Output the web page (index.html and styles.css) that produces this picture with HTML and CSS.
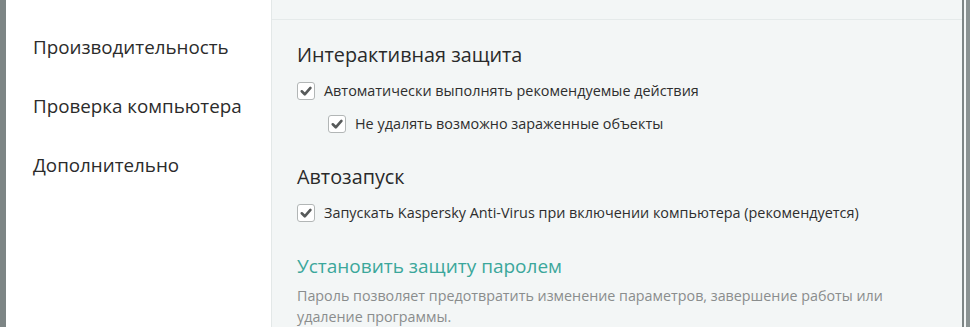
FILE: index.html
```html
<!DOCTYPE html>
<html lang="ru">
<head>
<meta charset="utf-8">
<link rel="stylesheet" href="styles.css">
</head>
<body>
<div class="window">
  <nav class="sidebar">
    <div class="nav-item">Производительность</div>
    <div class="nav-item">Проверка компьютера</div>
    <div class="nav-item">Дополнительно</div>
  </nav>
  <main class="content">
    <div class="topband"></div>
    <section class="body">
      <h2 class="heading">Интерактивная защита</h2>
      <label class="check"><span class="box"><svg viewBox="0 0 17 17"><path d="M4 8.8 L7.2 12 L13.2 5.2" /></svg></span>Автоматически выполнять рекомендуемые действия</label>
      <label class="check sub"><span class="box"><svg viewBox="0 0 17 17"><path d="M4 8.8 L7.2 12 L13.2 5.2" /></svg></span>Не удалять возможно зараженные объекты</label>
      <h2 class="heading second">Автозапуск</h2>
      <label class="check"><span class="box"><svg viewBox="0 0 17 17"><path d="M4 8.8 L7.2 12 L13.2 5.2" /></svg></span>Запускать Kaspersky Anti-Virus при включении компьютера (рекомендуется)</label>
      <a class="link">Установить защиту паролем</a>
      <p class="desc">Пароль позволяет предотвратить изменение параметров, завершение работы или удаление программы.</p>
    </section>
  </main>
  <div class="edge"></div>
</div>
</body>
</html>
```
FILE: styles.css
```css
* { box-sizing: border-box; }
html, body { margin: 0; padding: 0; }
body {
  width: 970px;
  height: 327px;
  overflow: hidden;
  font-family: "Open Sans", "Noto Sans", sans-serif;
  background: #fff;
}
.window {
  display: flex;
  height: 327px;
  border-left: 6px solid #7d8585;
}
.sidebar {
  width: 266px;
  flex: none;
  background: #fff;
  border-right: 1px solid #e3e8e8;
  padding-top: 32px;
  padding-left: 27px;
  display: flex;
  flex-direction: column;
  gap: 29px;
}
.nav-item {
  font-size: 18.8px;
  line-height: 30px;
  color: #2b2b2b;
}
.content {
  flex: 1;
  background: #f3f6f6;
  display: flex;
  flex-direction: column;
}
.topband {
  height: 20px;
  border-bottom: 1px solid #e5eaea;
  flex: none;
}
.body {
  padding: 22px 0 0 25px;
  display: flex;
  flex-direction: column;
  align-items: flex-start;
}
.heading {
  margin: 0;
  font-weight: normal;
  font-size: 19.8px;
  line-height: 26px;
  color: #2a2a2a;
}
.heading.second { margin-top: 30px; }
.check {
  display: flex;
  align-items: center;
  gap: 9px;
  font-size: 14.4px;
  line-height: 20px;
  color: #2e2e2e;
  margin-top: 13px;
}
.check.sub { margin-left: 31px; margin-top: 13px; }
.box {
  width: 18px;
  height: 18px;
  border: 1px solid #b2b6b6;
  border-radius: 3px;
  background: #fff;
  flex: none;
  display: flex;
}
.box svg { width: 16px; height: 16px; }
.box path {
  fill: none;
  stroke: #575a5a;
  stroke-width: 2.8;
  stroke-linecap: round;
  stroke-linejoin: round;
}
.link {
  margin-top: 30px;
  font-size: 19px;
  line-height: 26px;
  color: #3ba79b;
}
.desc {
  margin: 6px 0 0;
  font-size: 14.3px;
  line-height: 21px;
  color: #8a8d8d;
  width: 620px;
}
.edge {
  width: 8px;
  flex: none;
  background: #f3f6f6;
  border-left: 2px solid #7d8585;
  border-right: 4px solid #8a9292;
}
```
